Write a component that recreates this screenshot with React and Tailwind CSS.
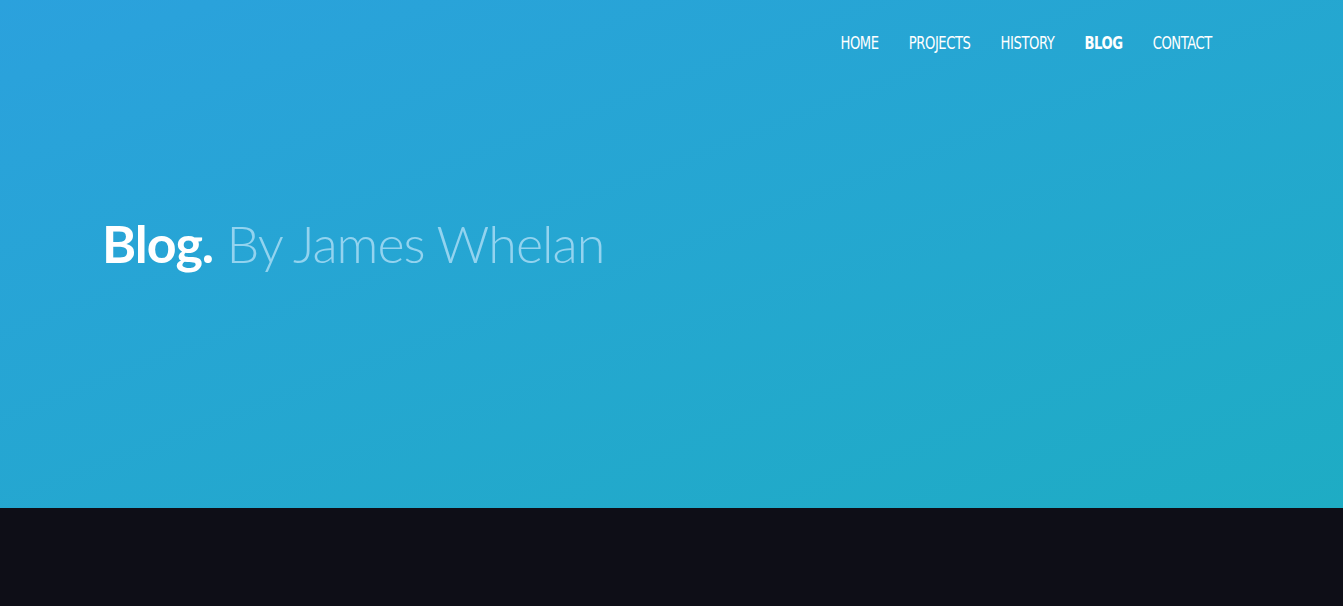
import React from 'react';

const links = ['HOME', 'PROJECTS', 'HISTORY', 'BLOG', 'CONTACT'];

const App = () => {
    return (
        <div className="min-h-screen bg-[#0e0e17]">
            <header className="h-[508px] bg-gradient-to-br from-[#2ba1dd] to-[#1eacc4] flex flex-col">
                {/* Nav */}
                <div className="flex justify-end pr-[131px] pt-[31px]">
                    <nav className="flex gap-[35px] scale-x-[0.86] origin-right font-['DejaVu_Sans_Condensed','Liberation_Sans',sans-serif]">
                        {links.map(l => (
                            <a
                                key={l}
                                href="#"
                                className={`text-white text-[17px] leading-6 tracking-[-0.5px] ${l === 'BLOG' ? 'font-bold' : 'font-normal'}`}
                            >
                                {l}
                            </a>
                        ))}
                    </nav>
                </div>

                <div className="flex-1 flex items-center pl-[102px] pb-[78px]">
                    <h1 className="font-['Lato',sans-serif] text-[52px] leading-none text-white">
                        <span className="font-bold tracking-[-1px]">Blog.</span>{' '}
                        <span className="font-light text-[#93d3ef] tracking-[-1px]">By James Whelan</span>
                    </h1>
                </div>
            </header>
            <div className="h-[98px] bg-[#0e0e17]" />
        </div>
    );
};

export default App;
